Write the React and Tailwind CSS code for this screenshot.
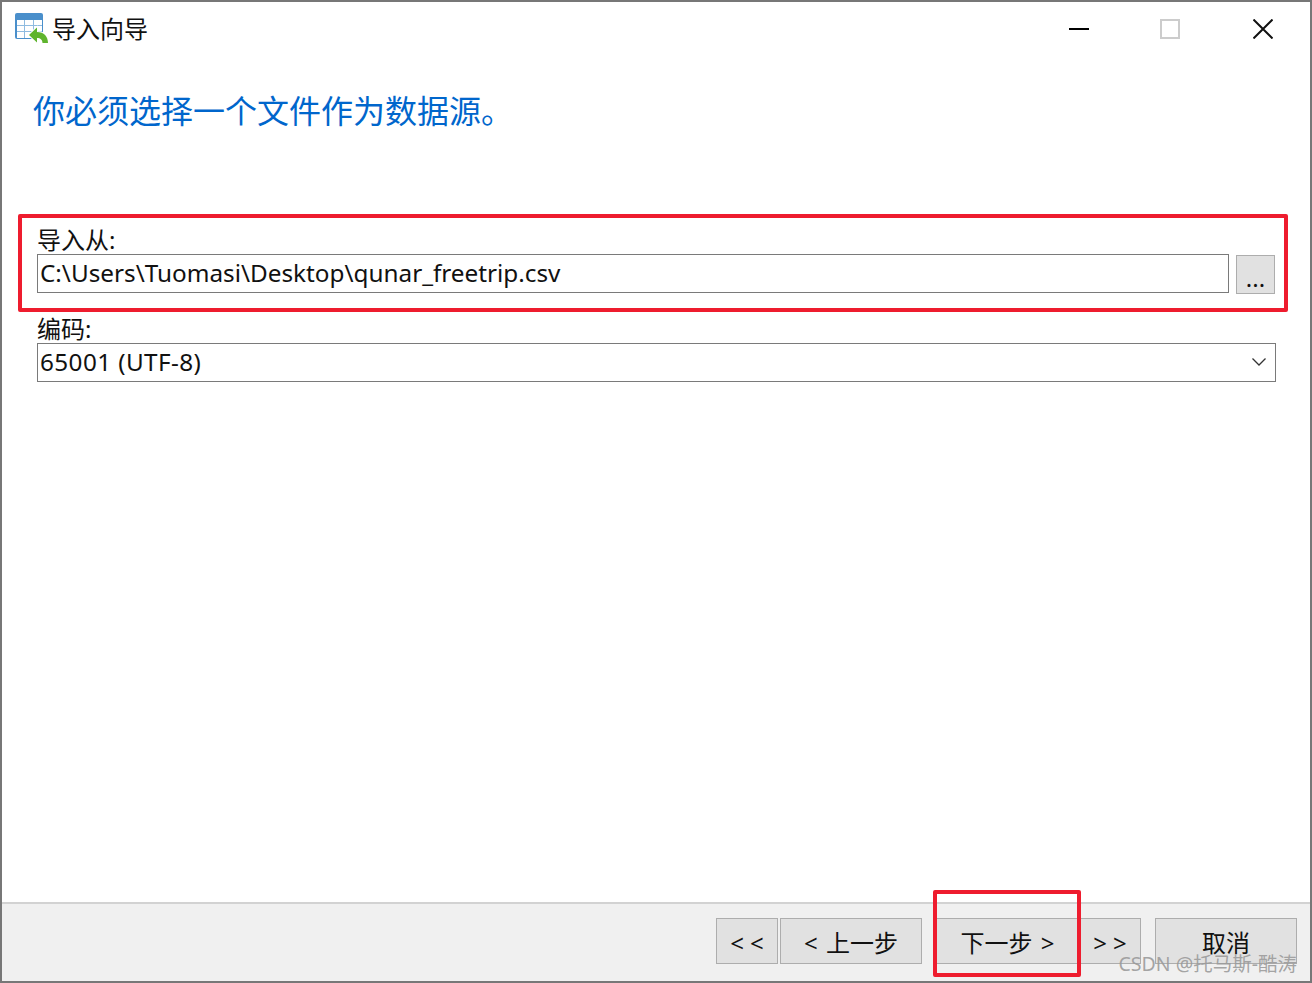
const cjk = "font-['Noto_Sans','Noto_Sans_CJK_SC',sans-serif]"

const arrow = "M14 22L22 14.500V19C29 19 33 23.500 33 30H27.500C27.500 27 25.500 25 22 25V29.500Z"

const WizardIcon = () => (
  <svg width="34" height="32" viewBox="0 0 34 32" className="shrink-0">
    <rect x="0" y="0" width="28" height="26" rx="2" fill="#4a8fcb" />
    <rect x="2" y="7" width="25" height="18" fill="#fff" />
    <path d="M9.500 7v18M18.500 7v18M2 12.500h25M2 18.500h25" stroke="#8fbbe0" strokeWidth="1" />
    <path d={arrow} fill="none" stroke="#fff" strokeWidth="2" />
    <path d={arrow} fill="#5fb42e" />
  </svg>
)

const TitleBar = () => (
  <div className="flex h-[54px] shrink-0 items-center pl-[13px]">
    <WizardIcon />
    <span className="ml-[3px] text-2xl text-[#111]">导入向导</span>
    <div className="ml-auto mr-[37px] flex items-center">
      <svg width="20" height="20" viewBox="0 0 20 20"><path d="M0 10h20" stroke="#000" strokeWidth="2" /></svg>
      <svg width="20" height="20" viewBox="0 0 20 20" className="ml-[71px]"><rect x="1" y="1" width="18" height="18" fill="none" stroke="#ccc" strokeWidth="2" /></svg>
      <svg width="20" height="20" viewBox="0 0 20 20" className="ml-[73px]"><path d="M0.500 0.500l19 19M19.500 0.500l-19 19" stroke="#111" strokeWidth="2" /></svg>
    </div>
  </div>
)

const FooterButton = ({ className, children }) => (
  <button className={`flex h-[46px] items-center justify-center border border-[#adadad] bg-[#e1e1e1] pt-[3px] text-2xl text-[#111] ${className}`}>
    {children}
  </button>
)

export default function App() {
  return (
    <div className={`relative flex h-[983px] w-[1312px] flex-col overflow-hidden border-2 border-[#777] bg-white ${cjk}`}>
      <TitleBar />
      <h1 className="ml-[31px] mt-[31px] text-[32px] leading-[48px] text-[#0066cc]">你必须选择一个文件作为数据源。</h1>

      <div className="mt-[91px] flex flex-col pl-[35px] pr-[34px]">
        <label className="h-[28px] text-2xl leading-[28px] text-[#111]">导入从:</label>
        <div className="flex h-[40px] items-start">
          <div className="flex h-[39px] flex-1 items-center border border-[#7a7a7a] pl-[2px] text-[24.3px] text-[#111]">
            C:\Users\Tuomasi\Desktop\qunar_freetrip.csv
          </div>
          <button className="ml-[7px] mr-px mt-px flex h-[39px] w-[39px] items-end justify-center border border-[#adadad] bg-[#e1e1e1] pb-[3px] text-2xl leading-none text-[#111]">
            ...
          </button>
        </div>
        <label className="mt-[21px] h-[28px] text-2xl leading-[28px] text-[#111]">编码:</label>
        <div className="flex h-[39px] items-center border border-[#7a7a7a] pl-[2px] pr-[9px] text-[24.3px] tracking-[0.4px] text-[#111]">
          65001 (UTF-8)
          <svg width="14" height="9" viewBox="0 0 14 9" className="ml-auto"><path d="M0.500 0.500l6.500 6.500 6.500-6.500" fill="none" stroke="#333" strokeWidth="1.300" /></svg>
        </div>
      </div>

      <div className="mt-auto flex h-[79px] items-start justify-end border-t-2 border-[#d2d2d2] bg-[#f0f0f0] pr-[13px] pt-[14px]">
        <FooterButton className="w-[62px]">&lt; &lt;</FooterButton>
        <FooterButton className="ml-[2px] w-[142px] [word-spacing:2px]">&lt; 上一步</FooterButton>
        <FooterButton className="ml-[14px] w-[143px] [word-spacing:2px]">下一步 &gt;</FooterButton>
        <FooterButton className="w-[62px]">&gt; &gt;</FooterButton>
        <FooterButton className="ml-[14px] w-[142px]">取消</FooterButton>
      </div>

      {/* annotations on top of the screenshot */}
      <div className="absolute left-[15.500px] top-[211.500px] h-[98.500px] w-[1270.500px] rounded-[2px] border-4 border-[#ee1c2e]" />
      <div className="absolute left-[931px] top-[888px] h-[87px] w-[148px] rounded-[2px] border-4 border-[#ee1c2e]" />
      <span className="absolute right-[13px] top-[950px] text-[19.500px] leading-6 text-[#9a9a9a]/90">CSDN @托马斯-酷涛</span>
    </div>
  )
}
